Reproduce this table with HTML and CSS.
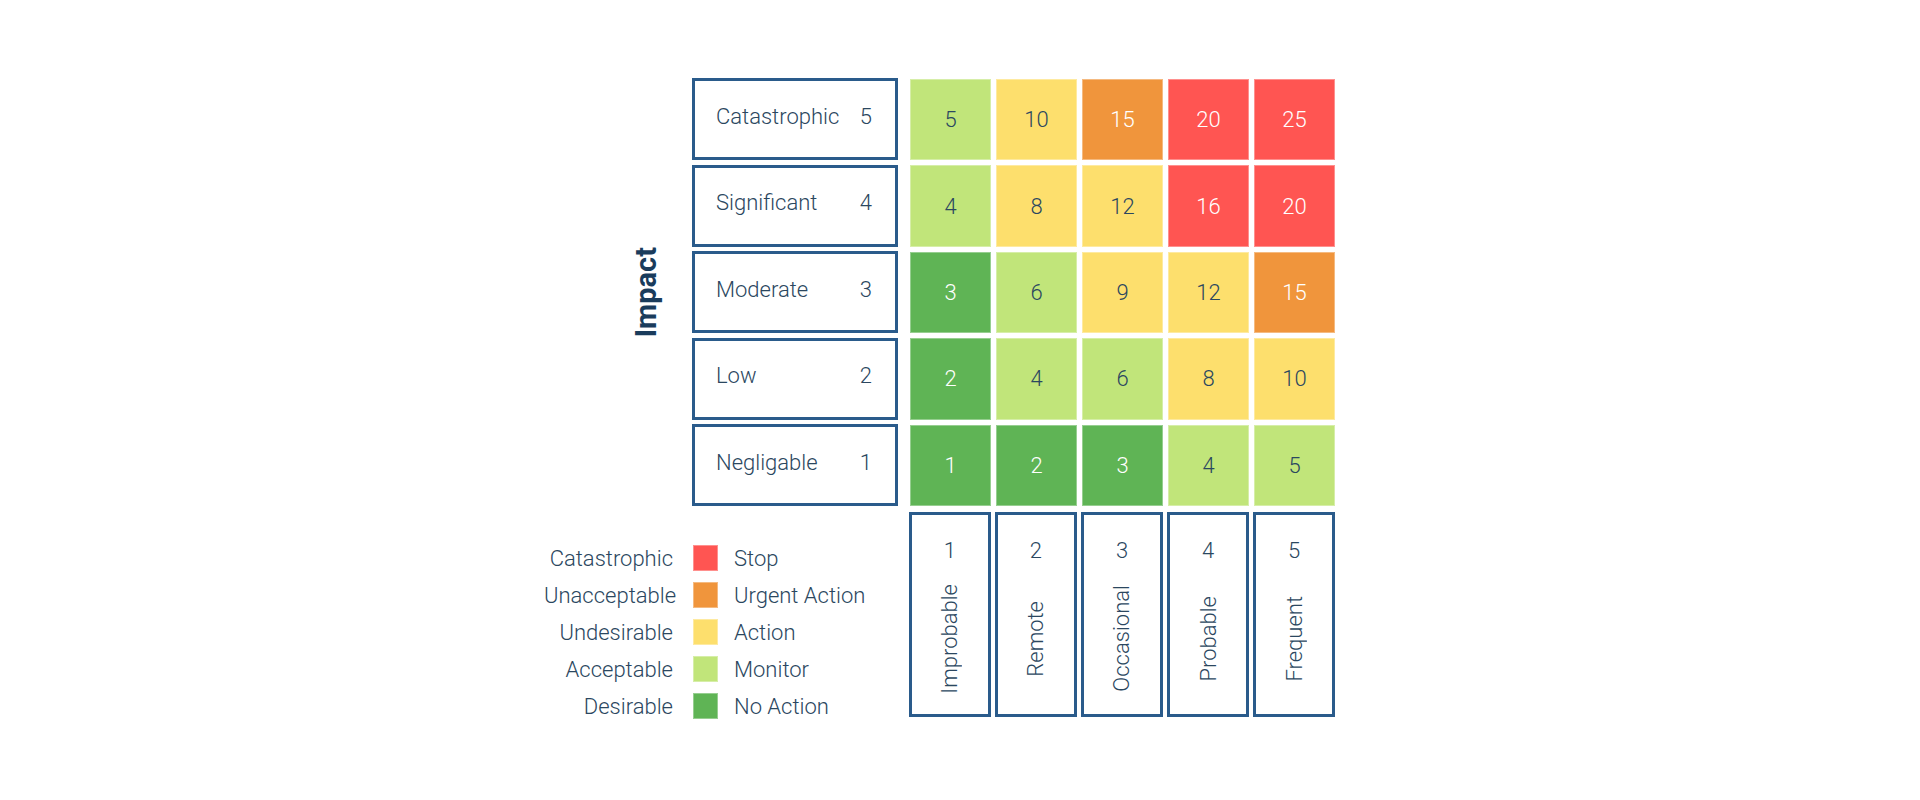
FILE: index.html
```html
<!DOCTYPE html>
<html lang="en">
<head>
<meta charset="utf-8">
<title>Risk Matrix</title>
<link rel="stylesheet" href="styles.css">
</head>
<body>
<div class="page">
  <div class="matrix">
    <div class="axis"><span class="axis-text">Impact</span></div>
    <div class="row-labels">
      <div class="row-label"><span>Catastrophic</span><span>5</span></div>
      <div class="row-label"><span>Significant</span><span>4</span></div>
      <div class="row-label"><span>Moderate</span><span>3</span></div>
      <div class="row-label"><span>Low</span><span>2</span></div>
      <div class="row-label"><span>Negligable</span><span>1</span></div>
    </div>
    <div class="cells">
      <div class="cell lg">5</div><div class="cell yl">10</div><div class="cell or">15</div><div class="cell rd">20</div><div class="cell rd">25</div>
      <div class="cell lg">4</div><div class="cell yl">8</div><div class="cell yl">12</div><div class="cell rd">16</div><div class="cell rd">20</div>
      <div class="cell gr">3</div><div class="cell lg">6</div><div class="cell yl">9</div><div class="cell yl">12</div><div class="cell or">15</div>
      <div class="cell gr">2</div><div class="cell lg">4</div><div class="cell lg">6</div><div class="cell yl">8</div><div class="cell yl">10</div>
      <div class="cell gr">1</div><div class="cell gr">2</div><div class="cell gr">3</div><div class="cell lg">4</div><div class="cell lg">5</div>
    </div>
    <div class="legend">
      <span class="lg-name">Catastrophic</span><span class="swatch rd"></span><span class="lg-act">Stop</span>
      <span class="lg-name">Unacceptable</span><span class="swatch or"></span><span class="lg-act">Urgent Action</span>
      <span class="lg-name">Undesirable</span><span class="swatch yl"></span><span class="lg-act">Action</span>
      <span class="lg-name">Acceptable</span><span class="swatch lg"></span><span class="lg-act">Monitor</span>
      <span class="lg-name">Desirable</span><span class="swatch gr"></span><span class="lg-act">No Action</span>
    </div>
    <div class="col-labels">
      <div class="col-label"><span class="col-num">1</span><span class="col-text"><span>Improbable</span></span></div>
      <div class="col-label"><span class="col-num">2</span><span class="col-text"><span>Remote</span></span></div>
      <div class="col-label"><span class="col-num">3</span><span class="col-text"><span>Occasional</span></span></div>
      <div class="col-label"><span class="col-num">4</span><span class="col-text"><span>Probable</span></span></div>
      <div class="col-label"><span class="col-num">5</span><span class="col-text"><span>Frequent</span></span></div>
    </div>
  </div>
</div>
</body>
</html>
```
FILE: styles.css
```css
html, body {
  margin: 0;
  padding: 0;
  background: #ffffff;
}

body {
  font-family: Roboto, "Liberation Sans", sans-serif;
  font-weight: 300;
  color: #2b4760;
  font-size: 22px;
}

.page {
  width: 1920px;
  height: 800px;
  box-sizing: border-box;
  padding: 78px 0 0 544px;
}

.matrix {
  display: grid;
  grid-template-columns: 137px 206px 426px;
  grid-template-rows: 428px 205px;
  column-gap: 11px;
  row-gap: 6px;
}

.axis {
  display: flex;
  align-items: center;
  justify-content: flex-end;
  padding-right: 20px;
}

.axis-text {
  writing-mode: vertical-rl;
  transform: rotate(180deg);
  font-weight: 700;
  font-size: 29px;
  line-height: 29px;
  color: #1a3c5c;
}

.row-labels {
  display: grid;
  grid-template-rows: repeat(5, 1fr);
  row-gap: 4.5px;
}

.row-label {
  display: flex;
  align-items: center;
  justify-content: space-between;
  border: 3px solid #2a5b8b;
  padding: 0 23px 6px 21px;
}

.cells {
  display: grid;
  grid-template-columns: repeat(5, 1fr);
  grid-template-rows: repeat(5, 1fr);
  column-gap: 5px;
  row-gap: 5px;
  margin-left: 1px;
  margin-top: 1px;
  height: 427px;
  width: 425px;
}

.cell {
  display: flex;
  align-items: center;
  justify-content: center;
  box-shadow: inset 0 0 0 1px rgba(255, 255, 255, 0.35);
}

.lg { background: #c1e57a; color: #2b4760; }
.yl { background: #fddf6d; color: #2b4760; }
.or { background: #f0953c; color: #ffffff; }
.rd { background: #ff5552; color: #ffffff; }
.gr { background: #5fb455; color: #ffffff; }

.legend {
  grid-column: 1 / 3;
  display: grid;
  grid-template-columns: 129px 25px auto;
  grid-auto-rows: 26px;
  row-gap: 11px;
  column-gap: 18px;
  align-content: start;
  align-items: center;
  padding-top: 33px;
}

.legend .swatch {
  margin-left: 2px;
  width: 25px;
  height: 26px;
  box-shadow: inset 0 0 0 1px rgba(255, 255, 255, 0.35);
}

.lg-name {
  text-align: right;
  white-space: nowrap;
}

.lg-act {
  color: #2b4760;
  white-space: nowrap;
}

.col-labels {
  display: grid;
  grid-template-columns: repeat(5, 1fr);
  column-gap: 4.5px;
}

.col-label {
  display: flex;
  flex-direction: column;
  align-items: center;
  border: 3px solid #2a5b8b;
  padding-top: 23px;
}

.col-num {
  line-height: 25px;
}

.col-text {
  flex: 1;
  display: flex;
  align-items: center;
  justify-content: center;
}

.col-text span {
  writing-mode: vertical-rl;
  transform: rotate(180deg);
  line-height: 25px;
}
```
